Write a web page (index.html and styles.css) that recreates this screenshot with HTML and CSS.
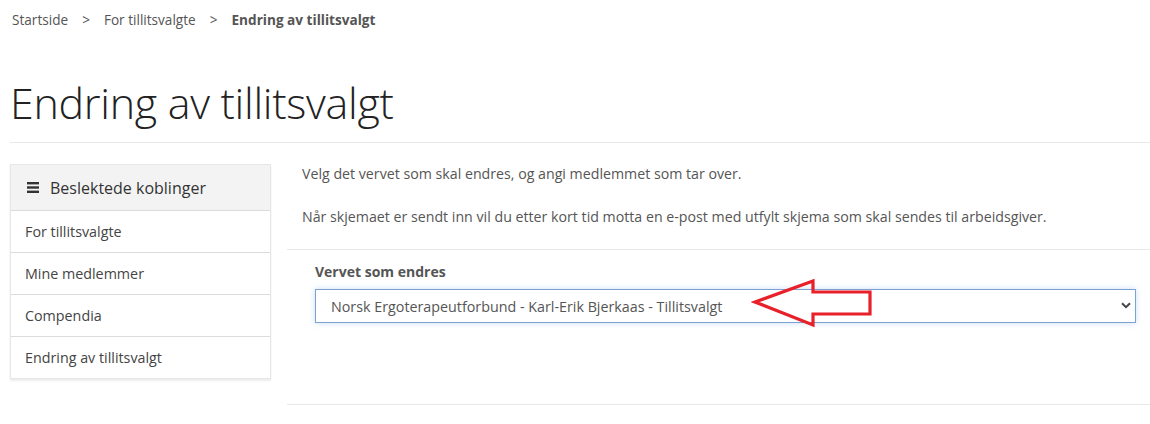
FILE: index.html
```html
<!DOCTYPE html>
<html lang="no">
<head>
<meta charset="utf-8">
<title>Endring av tillitsvalgt</title>
<link rel="stylesheet" href="styles.css">
</head>
<body>
<div class="page">
  <nav class="breadcrumb">
    <a href="#">Startside</a>
    <span class="sep">&gt;</span>
    <a href="#">For tillitsvalgte</a>
    <span class="sep">&gt;</span>
    <strong>Endring av tillitsvalgt</strong>
  </nav>
  <h1 class="title">Endring av tillitsvalgt</h1>
  <hr class="rule">
  <div class="layout">
    <aside class="sidebar">
      <div class="side-head">
        <svg class="menu-icon" width="12" height="11" viewBox="0 0 12 11"><rect x="0" y="0" width="12" height="2.4" fill="#333"/><rect x="0" y="4.3" width="12" height="2.4" fill="#333"/><rect x="0" y="8.6" width="12" height="2.4" fill="#333"/></svg>
        <span>Beslektede koblinger</span>
      </div>
      <a class="side-item" href="#">For tillitsvalgte</a>
      <a class="side-item" href="#">Mine medlemmer</a>
      <a class="side-item" href="#">Compendia</a>
      <a class="side-item" href="#">Endring av tillitsvalgt</a>
    </aside>
    <main class="main">
      <div class="intro">
        <p>Velg det vervet som skal endres, og angi medlemmet som tar over.</p>
        <p>Når skjemaet er sendt inn vil du etter kort tid motta en e-post med utfylt skjema som skal sendes til arbeidsgiver.</p>
      </div>
      <hr class="rule">
      <div class="form">
        <label class="label" for="verv">Vervet som endres</label>
        <div class="select-wrap">
          <select id="verv" class="select">
            <option>Norsk Ergoterapeutforbund - Karl-Erik Bjerkaas - Tillitsvalgt</option>
          </select>
          <svg class="chevron" width="10" height="7" viewBox="0 0 10 7"><path d="M1 1.2 L5 5.2 L9 1.2" fill="none" stroke="#444" stroke-width="2"/></svg>
          <svg class="annot" width="130" height="52" viewBox="0 0 130 52"><polygon points="4,23 62,2 62,13 119,13 119,35 62,35 62,46" fill="none" stroke="#e8202a" stroke-width="3.2" stroke-linejoin="miter"/></svg>
        </div>
      </div>
      <hr class="rule">
    </main>
  </div>
</div>
</body>
</html>
```

FILE: styles.css
```css
* { box-sizing: border-box; }
html, body { margin: 0; padding: 0; background: #fff; }
body {
  font-family: "Open Sans", "Noto Sans", "Liberation Sans", sans-serif;
  font-size: 14px;
  color: #555;
}
.page { padding-left: 10px; }
.breadcrumb {
  display: flex;
  align-items: center;
  height: 38px;
  padding-left: 2px;
  font-size: 13.6px;
  color: #555;
}
.breadcrumb a { color: #555; text-decoration: none; }
.breadcrumb .sep { margin: 0 14px; }
.breadcrumb strong { color: #555; font-weight: 700; }
.title {
  margin: 34px 0 0 0;
  font-weight: 300;
  font-size: 43px;
  line-height: 62px;
  color: #222;
  letter-spacing: -0.3px;
}
.rule {
  border: 0;
  border-top: 1px solid #e8e8e8;
  margin: 0;
}
.page > .rule { margin-top: 8px; }
.layout {
  display: flex;
  gap: 16px;
  margin-top: 21px;
}
.sidebar {
  width: 261px;
  flex: none;
  border: 1px solid #e6e6e6;
  box-shadow: 0 2px 2px rgba(0,0,0,0.08);
  align-self: flex-start;
}
.side-head {
  display: flex;
  align-items: center;
  gap: 11px;
  height: 45px;
  padding-left: 16px;
  background: #f3f3f3;
  font-size: 16px;
  color: #333;
}
.side-item {
  display: flex;
  align-items: center;
  height: 42px;
  padding-left: 14px;
  border-top: 1px solid #dcdcdc;
  color: #444;
  text-decoration: none;
  font-size: 14.3px;
}
.main { flex: 1; }
.intro { padding: 0 0 22px 15px; }
.intro p {
  margin: 0 0 23px 0;
  line-height: 20px;
  font-size: 14.2px;
}
.intro p:last-child { margin-bottom: 0; }
.form { padding: 12px 14px 81px 28px; }
.label {
  display: block;
  font-weight: 700;
  font-size: 14px;
  line-height: 20px;
  color: #555;
  margin-bottom: 7px;
}
.select-wrap { position: relative; }
.select {
  display: block;
  width: 100%;
  height: 34px;
  appearance: none;
  -webkit-appearance: none;
  border: 1px solid #7ea2cf;
  border-radius: 0;
  background: #fff;
  box-shadow: 0 0 6px rgba(102,160,230,0.35);
  padding: 0 30px 0 15px;
  font-family: inherit;
  font-size: 14.3px;
  color: #555;
  outline: none;
}
.chevron {
  position: absolute;
  right: 5px;
  top: 13px;
  pointer-events: none;
}
.annot {
  position: absolute;
  left: 436px;
  top: -10px;
  pointer-events: none;
}
```
